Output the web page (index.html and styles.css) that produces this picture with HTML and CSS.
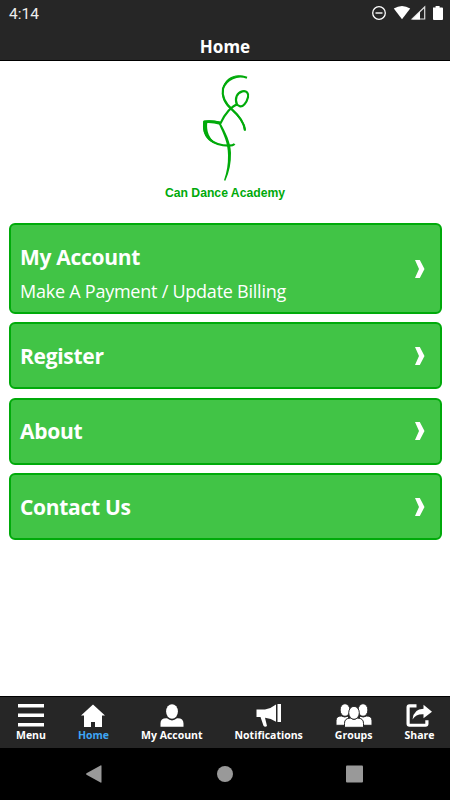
FILE: index.html
```html
<!DOCTYPE html>
<html lang="en">
<head>
<meta charset="utf-8">
<title>Can Dance Academy</title>
<link rel="stylesheet" href="styles.css">
</head>
<body>
<div class="app">
  <div class="status">
    <span>4:14</span>
    <svg class="status-icons" viewBox="0 0 72 18" width="72" height="18">
      <circle cx="8" cy="9" r="6.3" fill="none" stroke="#fff" stroke-width="1.3"/>
      <path d="M4.5 9h7" stroke="#fff" stroke-width="1.4"/>
      <path d="M22.800 4.500Q31 -.700 39.200 4.500L31 15.300Z" fill="#fff"/>
      <path d="M41.200 15L53.700 3V15Z" fill="none" stroke="#ddd" stroke-width="1.200"/>
      <path d="M41 15.500L49 7.500V15.500Z" fill="#fff"/>
      <path d="M62 3.500h2.600V2h4v1.500h2.500q.9 0 .9.900v10.700q0 .900-.900.900h-8.200q-.900 0-.900-.900z" fill="#fff"/>
    </svg>
  </div>
  <header class="header"><h1>Home</h1></header>
  <main class="content">
    <div class="brand">
      <svg class="dancer" viewBox="150 25 160 330" width="53.333" height="110">
        <path d="M291 38C263 27 231 40 220 71C214 98 229 116 247 133C266 150 284 170 288 198L282 198C281 175 263 155 243 136C225 120 212 101 217 73C224 36 262 22 291 38Z"/>
        <path class="line" d="M291 39C262 29 229 42 219 72C214 98 227 116 245 133C265 151 282 171 285 196"/>
        <path class="line" d="M261 120C253 101 261 84 277 80C290 77 297 86 294 98C290 115 278 127 270 125Q266 123 261 120"/>
        <path class="line" d="M263 119C246 123 224 147 211 177"/>
        <path class="line" d="M211 174Q180 168 163 171C157 214 185 243 237 243Q249 243 254 238"/>
        <path d="M160 169L172 173C167 210 188 239 220 241C180 240 153 217 160 169Z"/>
        <path d="M162 168Q188 164 214 173L210 180Q184 173 162 176Z"/>
        <path d="M211 174C226 201 242 232 243 264Q244 310 226 348L222 347Q235 310 234 272C234 235 221 211 207 179Z"/>
      </svg>
      <p>Can Dance Academy</p>
    </div>
    <div class="cards">
      <a class="card tall"><div><h2>My Account</h2><p>Make A Payment / Update Billing</p></div>
        <svg class="chevron" viewBox="0 0 9 18"><path d="M0 0h4.800L9.500 9l-4.700 9H0L4 9z"/></svg></a>
      <a class="card"><h2>Register</h2>
        <svg class="chevron" viewBox="0 0 9 18"><path d="M0 0h4.800L9.500 9l-4.700 9H0L4 9z"/></svg></a>
      <a class="card"><h2>About</h2>
        <svg class="chevron" viewBox="0 0 9 18"><path d="M0 0h4.800L9.500 9l-4.700 9H0L4 9z"/></svg></a>
      <a class="card"><h2>Contact Us</h2>
        <svg class="chevron" viewBox="0 0 9 18"><path d="M0 0h4.800L9.500 9l-4.700 9H0L4 9z"/></svg></a>
    </div>
  </main>
  <nav class="tabs">
    <a><svg viewBox="0 0 26 24" width="26" height="24"><path d="M0 0h26v3.500H0zM0 9.500h26V13H0zM0 19h26v3.500H0z"/></svg>Menu</a>
    <a class="active"><svg viewBox="0 0 24 24" width="24" height="24"><path d="M12 .5L24 11.500h-3V23h-7v-5h-4v5H3V11.500H0z"/></svg>Home</a>
    <a><svg viewBox="0 0 24 24" width="24" height="24"><ellipse cx="12" cy="7.500" rx="5.900" ry="7.300"/><path d="M.5 22.700v-3.500Q.5 14 7 14.300q5 4.200 10 0 6.500-.3 6.500 5.200v3.200z"/></svg>My Account</a>
    <a><svg viewBox="0 0 25 24" width="25" height="24"><path d="M.5 5.500H9Q15 4.500 20 .5v17.300Q15 14.500 9 13.800L11 22Q9 23.500 7.500 21.700L4.500 13H.5zM21.500 0H25v18h-3.500z"/></svg>Notifications</a>
    <a><svg viewBox="0 0 36 24" width="36" height="24"><g class="outlined"><ellipse cx="9" cy="6" rx="4.900" ry="6.300"/><ellipse cx="27" cy="6" rx="4.900" ry="6.300"/><path d="M0 21.300v-4.500q0-5 5.500-4.800 3 2 7 0v9.300zM36 21.300v-4.500q0-5-5.500-4.800-3 2-7 0v9.300z"/><path d="M8.500 23.300v-4q0-5.200 6-5.200 3.500 2.500 7 0 6 0 6 5.200v4z"/><ellipse cx="18" cy="8.800" rx="5.300" ry="6.500"/></g></svg>Groups</a>
    <a><svg viewBox="0 0 26 24" width="26" height="24"><path d="M10.500.2H3.500Q.5.200.5 3.200v16.500q0 3 3 3h16q3 0 3-3v-3.500h-3.200v3.500H3.700V3.400h6.800z"/><path d="M17.500.7L26 7.700l-8.500 6.500v-4Q10 9.700 6.500 15.500 7.500 4.700 17.500 4.700z"/></svg>Share</a>
  </nav>
  <div class="system">
    <svg viewBox="0 0 450 52" width="450" height="52"><path d="M101.500 18v16q0 1-1 .5L86.500 26.700q-1-.7 0-1.400L100.500 17.500q1-.5 1 .5z"/><circle cx="225" cy="26" r="8"/><rect x="346" y="17.500" width="17" height="17" rx="1"/></svg>
  </div>
</div>
</body>
</html>
```
FILE: styles.css
```css
* { box-sizing: border-box; }
body { margin: 0; background: #fff; color: #fff; font-family: "Open Sans", "Noto Sans", sans-serif; }
h1, h2, p { margin: 0; }
.app { width: 450px; height: 800px; display: flex; flex-direction: column; overflow: hidden; }
.status {
  height: 32px; padding: 4px 7px 0 9px; display: flex; justify-content: space-between;
  background: #262626; font: 15.500px/20px Roboto, sans-serif; color: #eee;
}
.header { height: 29px; background: #262626; border-bottom: 1px solid #000; text-align: center; }
.header h1 { font: bold 17px/29px "Noto Sans", sans-serif; }
.content { flex: 1; padding: 14px 9px 0; }
.brand { height: 148px; text-align: center; color: #00aa0a; }
.dancer { display: block; margin: -2px 0 1px 191px; fill: #00aa0a; }
.dancer .line { fill: none; stroke: #00aa0a; stroke-width: 6.500; }
.brand p { font: bold 12.200px/18px "Liberation Sans", sans-serif; }
.cards { display: grid; gap: 8.200px; padding-top: 2px; }
.card {
  width: 432.500px; height: 67.200px; padding: 0 15.500px 0 9px; display: flex; align-items: center; justify-content: space-between;
  background: #41c446; border: 2px solid #00aa0a; border-radius: 6px;
}
.card.tall { height: 91px; }
.card.tall div { padding-top: 11px; }
.card h2 { font-size: 21px; line-height: 34px; letter-spacing: -.3px; }
.card p { font-size: 18px; line-height: 34px; letter-spacing: -.240px; }
.chevron { width: 9px; height: 18px; fill: #fff; overflow: visible; }
.tabs {
  height: 52px; padding: 7px 15.500px 0 16px; display: flex; justify-content: space-between;
  background: #262626; border-top: 1px solid #000; font: bold 10.500px/14px "Open Sans", sans-serif;
}
.tabs a { display: flex; flex-direction: column; align-items: center; }
.tabs svg { fill: #fff; overflow: visible; }
.tabs .active { color: #3ea6f5; }
.outlined { stroke: #262626; stroke-width: 1; }
.system { height: 52px; background: #000; }
.system svg { display: block; fill: #999; }
```
